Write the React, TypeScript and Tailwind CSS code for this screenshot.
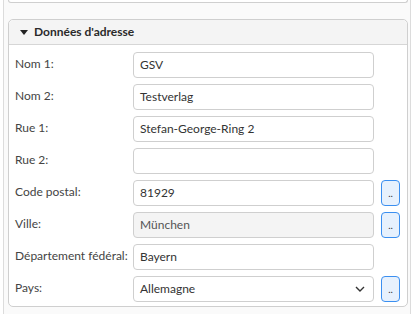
const ROWS = [
  { label: "Nom 1:", value: "GSV" },
  { label: "Nom 2:", value: "Testverlag" },
  { label: "Rue 1:", value: "Stefan-George-Ring 2" },
  { label: "Rue 2:", value: "" },
  { label: "Code postal:", value: "81929", button: true },
  { label: "Ville:", value: "München", button: true, disabled: true },
  { label: "Département fédéral:", value: "Bayern" },
  { label: "Pays:", value: "Allemagne", button: true, select: true },
];

function PickButton() {
  return (
    <button
      type="button"
      className="flex h-[26px] w-[19px] items-end justify-center rounded-[4px] border border-[#3b8ff0] bg-[#e7f1fd] pb-[7px] text-[10px] leading-none text-[#333]"
    >
      ..
    </button>
  );
}

export default function App() {
  return (
    <div
      className="h-[314px] w-[413px] overflow-hidden bg-white text-[12px] text-[#333]"
      style={{ fontFamily: "Lato, 'Open Sans', sans-serif" }}
    >
      <div className="ml-[3px] h-full w-[408px] border-x border-[#dcdcdc] bg-[#fafafa] pl-1">
        <div className="h-[3px] w-[400px] rounded-b-[5px] border-x border-b border-[#cfcfcf] bg-white" />

        <section className="mt-4 w-[400px] rounded-[5px] border border-[#cfcfcf] bg-white">
          <header className="flex h-[25px] items-center gap-[6px] rounded-t-[5px] border-b border-[#d6d6d6] bg-[#f4f4f4] pl-[11px]">
            <svg width="8" height="5" viewBox="0 0 8 5" className="mt-[1px]">
              <path d="M0 0 H8 L4 5 Z" fill="#222" />
            </svg>
            <h2 className="font-bold text-[#2a2a2a]">Données d'adresse</h2>
          </header>

          <div className="flex flex-col gap-[6px] pb-[4px] pl-[6px] pt-[7px]">
            {ROWS.map((row) => (
              <div key={row.label} className="flex items-center">
                <label className="w-[118px] shrink-0 pb-[2px] text-[#444]">{row.label}</label>
                <div
                  className={
                    "flex h-[26px] w-[241px] items-center justify-between rounded-[4px] border border-[#cfcfcf] pl-[6px] pr-[8px] " +
                    (row.disabled ? "bg-[#f4f4f4] text-[#555]" : "bg-white")
                  }
                >
                  <span>{row.value}</span>
                  {row.select && (
                    <svg width="10" height="6" viewBox="0 0 10 6">
                      <path d="M1 1 L5 5 L9 1" fill="none" stroke="#333" strokeWidth="1.4" />
                    </svg>
                  )}
                </div>
                {row.button && (
                  <div className="ml-[7px]">
                    <PickButton />
                  </div>
                )}
              </div>
            ))}
          </div>
        </section>
      </div>
    </div>
  );
}
